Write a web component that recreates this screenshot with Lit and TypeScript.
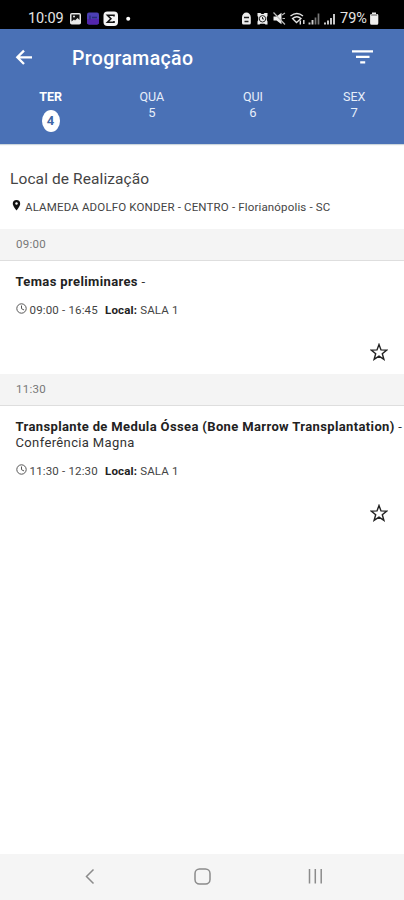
import { LitElement, html, css, svg, nothing } from "lit";
import { customElement, property } from "lit/decorators.js";
import { classMap } from "lit/directives/class-map.js";

interface Session {
  slot: string;
  title: string;
  kind: string;
  time: string;
  place: string;
}

const days = [
  { name: "TER", day: 4 },
  { name: "QUA", day: 5 },
  { name: "QUI", day: 6 },
  { name: "SEX", day: 7 },
];

const sessions: Session[] = [
  { slot: "09:00", title: "Temas preliminares", kind: "", time: "09:00 - 16:45", place: "SALA 1" },
  {
    slot: "11:30",
    title: "Transplante de Medula Óssea (Bone Marrow Transplantation)",
    kind: "Conferência Magna",
    time: "11:30 - 12:30",
    place: "SALA 1",
  },
];

@customElement("status-bar")
class StatusBar extends LitElement {
  static styles = css`
    :host {
      display: flex;
      justify-content: space-between;
      box-sizing: border-box;
      height: 29px;
      padding: 8px 25px 0 28px;
      background: #000;
      color: #e4e4e4;
      font: 14.5px/21px Roboto, sans-serif;
    }
    .side { display: flex; height: 21px; }
    .clock { width: 41px; letter-spacing: -0.1px; }
    .pct { width: 28px; font-size: 14.5px; letter-spacing: 0; }
    svg { display: block; }
  `;
  render() {
    return html`
      <div class="side">
        <span class="clock">10:09</span>
        <svg width="64" height="21" viewBox="69 8 64 21">
          <rect x="70" y="13" width="11" height="11.5" rx="1.8" fill="#e8e8e8" />
          <path d="M71.5 14.5h8v5.500l-2-2-2.500 2.500-1-1-2.500 2z" fill="#111" />
          <circle cx="74" cy="16.600" r="1" fill="#e8e8e8" />
          <rect x="87" y="12.500" width="12" height="12" rx="2" fill="#4b3fb4" />
          <path d="M87 19h12v3.500a2 2 0 0 1-2 2h-8a2 2 0 0 1-2-2z" fill="#5325ac" />
          <path d="M90 15.500v4M92 17.500h5" stroke="#262b78" stroke-width="1.300" />
          <rect x="103.500" y="11.500" width="14.500" height="14.500" rx="4" fill="#f5f5f5" />
          <path d="M114 16.600v-1.300h-6.500l3.400 3.500-3.400 3.500h6.500V21" fill="none" stroke="#111" stroke-width="1.600" />
          <circle cx="128.200" cy="18.700" r="2" fill="#fff" />
        </svg>
      </div>
      <div class="side">
        <svg width="99" height="21" viewBox="241 8 99 21">
          <g fill="#ededed">
            <path d="M242 17.500a4.400 5 0 0 1 8.800 0v5.500a1.500 1.500 0 0 1-1.500 1.500h-5.800a1.500 1.500 0 0 1-1.500-1.500z" />
            <path d="M257.500 13h3l1 1h2l1-1h3v3l-.7 1v3l.7 1.500v3h-2l-1-.8h-4l-1 .8h-2v-3l.7-1.500v-3l-.7-1z" />
            <path d="M273.500 16.500h3l5-3.700v11.500l-5-3.800h-3z" />
          </g>
          <path d="M244 17.500h5M244.500 21.500h4" stroke="#222" stroke-width="1.300" />
          <circle cx="262.500" cy="18.800" r="3.200" fill="none" stroke="#222" />
          <path d="M262.500 17v2h1.500" fill="none" stroke="#222" />
          <path d="M273.500 12.500l11.500 12M282 15l3 -2M282.500 18.500h2.500" stroke="#bbb" stroke-width="1.200" />
          <path d="M290.500 16q6.500-5 12.500 0M292.500 18.500q4.500-3.500 8.500 0l-4.500 4z" fill="none" stroke="#e4e4e4" stroke-width="1.300" />
          <path d="M300.300 24.500v-4M303.800 20v4" stroke="#e4e4e4" stroke-width="1.400" />
          <path d="M309.500 24.500v-2M312.500 24.500v-4.500M328 24.500v-4M325 24.500v-2M331 24.500v-6.500M334 24.500v-10.500" stroke="#cfcfcf" stroke-width="1.900" />
          <path d="M315.500 24.500v-7M318.500 24.500v-11" stroke="#777" stroke-width="1.700" />
        </svg>
        <span class="pct">79%</span>
        <svg width="11" height="21" viewBox="368 8 11 21">
          <path d="M372 12.500h4v1.500h1a1.300 1.300 0 0 1 1.300 1.300v8a1.500 1.500 0 0 1-1.500 1.500h-5.200a1.500 1.500 0 0 1-1.500-1.500v-8a1.300 1.300 0 0 1 1.300-1.300h.6z" fill="#eee" />
          <path d="M371.200 15h6" stroke="#555" />
        </svg>
      </div>
    `;
  }
}

@customElement("app-header")
class AppHeader extends LitElement {
  static styles = css`
    :host {
      display: block;
      height: 114.500px;
      background: #4a71b6;
      color: #fff;
      font-family: Roboto, sans-serif;
      box-shadow: 0 1px 1px #ccd6dc;
    }
    .bar { display: flex; align-items: center; height: 59px; padding: 0 30px 0 15px; }
    .title { flex: 1; margin: 0 0 0 39px; font-size: 19.500px; font-weight: 500; line-height: 24px; letter-spacing: 0.350px; }
    .days { display: grid; grid-template-columns: repeat(4, 101.200px); }
    .day { display: flex; flex-direction: column; align-items: center; font-size: 12.500px; line-height: 16px; padding-top: 1px; color: #e6eefa; }
    .num { font-size: 13px; }
    .on { color: #fff; font-weight: 700; }
    .on .num {
      width: 18px; height: 22px; margin-top: 5px; border-radius: 50%;
      background: #fff; color: #3f67a6; text-align: center; line-height: 22px;
    }
    svg { display: block; }
    .back { margin-top: -3px; }
    .filter { margin-top: -3px; }
  `;
  render() {
    return html`
      <div class="bar">
        <svg class="back" width="18" height="18" viewBox="0 0 18 18">
          <path d="M17 9.300H3M9 2.600L2.300 9.300L9 16" fill="none" stroke="#fff" stroke-width="2.300" />
        </svg>
        <h1 class="title">Programação</h1>
        <svg class="filter" width="23" height="18" viewBox="0 0 23 18">
          <path d="M1 3.300h21M5 8.800h13.500M9.200 14.300h5" stroke="#fff" stroke-width="2.300" />
        </svg>
      </div>
      <div class="days">
        ${days.map(
          (d, i) => html`<div class=${classMap({ day: true, on: i === 0 })}>
            <span>${d.name}</span><span class="num">${d.day}</span>
          </div>`
        )}
      </div>
    `;
  }
}

@customElement("session-item")
class SessionItem extends LitElement {
  @property({ attribute: false }) session!: Session;
  static styles = css`
    :host { display: block; font-family: Roboto, sans-serif; color: #333; }
    .slot {
      box-sizing: border-box; height: 32px; padding-left: 16px;
      background: #f4f4f4; border-bottom: 1px solid #dedede;
      font-size: 11.500px; line-height: 30px; color: #777; letter-spacing: 0.300px;
    }
    .body { padding: 13px 0 0 15.500px; }
    .name { margin: 0; font-size: 13px; line-height: 16px; font-weight: 400; letter-spacing: 0.370px; white-space: nowrap; }
    .name b { font-weight: 700; color: #222; }
    .meta { display: flex; margin-top: 11.500px; height: 16px; font-size: 11.500px; line-height: 16px; letter-spacing: 0.170px; color: #444; }
    .meta svg { margin: 1px 3px 0 0; }
    .time { width: 75.500px; }
    .meta b { color: #222; }
    .foot { display: flex; justify-content: flex-end; padding: 25.500px 16px 0 0; height: 31px; }
    svg { display: block; }
  `;
  render() {
    const s = this.session;
    return html`
      <div class="slot">${s.slot}</div>
      <div class="body">
        <h2 class="name"><b>${s.title}</b> -${s.kind ? html`<br />${s.kind}` : nothing}</h2>
        <div class="meta">
          <svg width="11" height="11" viewBox="0 0 11 11">
            <circle cx="5.500" cy="5.500" r="4.700" fill="none" stroke="#555" />
            <path d="M5.500 2.500v3.200l2.600 1.300" fill="none" stroke="#555" />
          </svg>
          <span class="time">${s.time}</span>
          <span><b>Local:</b> ${s.place}</span>
        </div>
        <div class="foot">
          <svg width="18" height="18" viewBox="0 0 18 18">
            <path d="M9 1.500L11 6.900L16.800 7.100L12.300 10.700L13.900 16.300L9 13.100L4.100 16.300L5.700 10.700L1.200 7.100L7 6.900Z" fill="none" stroke="#222" stroke-width="1.400" />
          </svg>
        </div>
      </div>
    `;
  }
}

@customElement("nav-bar")
class NavBar extends LitElement {
  static styles = css`
    :host { display: grid; grid-template-columns: 179px 46px 179px; justify-items: center; align-items: center; height: 46px; background: #f5f5f5; }
    svg { display: block; }
  `;
  icon(d: unknown) {
    return html`<svg width="20" height="20" viewBox="0 0 20 20" fill="none" stroke="#8b8b8b" stroke-width="1.500">${d}</svg>`;
  }
  render() {
    return html`
      ${this.icon(svg`<path d="M13.500 2.500L6.500 9.500L13.500 16.500" />`)}
      ${this.icon(svg`<rect x="3" y="2" width="15" height="15" rx="4.500" />`)}
      ${this.icon(svg`<path d="M4.500 2v14.500M10.300 2v14.500M16.200 2v14.500" />`)}
    `;
  }
}

@customElement("app-root")
class AppRoot extends LitElement {
  static styles = css`
    :host { display: flex; flex-direction: column; height: 900px; overflow: hidden; background: #fff; font-family: Roboto, sans-serif; }
    main { flex: 1; }
    .venue { box-sizing: border-box; height: 85.500px; padding: 25px 0 0 10px; }
    .heading { margin: 0; font-size: 15.500px; line-height: 20px; font-weight: 400; letter-spacing: 0.100px; color: #444; }
    .address { display: flex; margin: 10px 0 0; font-size: 11.500px; line-height: 16px; letter-spacing: 0.160px; color: #444; white-space: nowrap; }
    .address svg { display: block; margin: 0 4px 0 2px; }
    .first { height: 145px; }
  `;
  render() {
    return html`
      <status-bar></status-bar>
      <app-header></app-header>
      <main>
        <section class="venue">
          <h2 class="heading">Local de Realização</h2>
          <p class="address">
            <svg width="9" height="13" viewBox="0 0 9 13">
              <path d="M4.500 1a3.700 3.700 0 0 0-3.700 3.700C.8 7.200 4.500 11.500 4.500 11.500s3.700-4.300 3.700-6.800A3.700 3.700 0 0 0 4.500 1z" fill="#111" />
              <circle cx="4.500" cy="4.500" r="1.200" fill="#fff" />
            </svg>
            <span>ALAMEDA ADOLFO KONDER - CENTRO - Florianópolis - SC</span>
          </p>
        </section>
        ${sessions.map((s, i) => html`<session-item class=${classMap({ first: i === 0 })} .session=${s}></session-item>`)}
      </main>
      <nav-bar></nav-bar>
    `;
  }
}
